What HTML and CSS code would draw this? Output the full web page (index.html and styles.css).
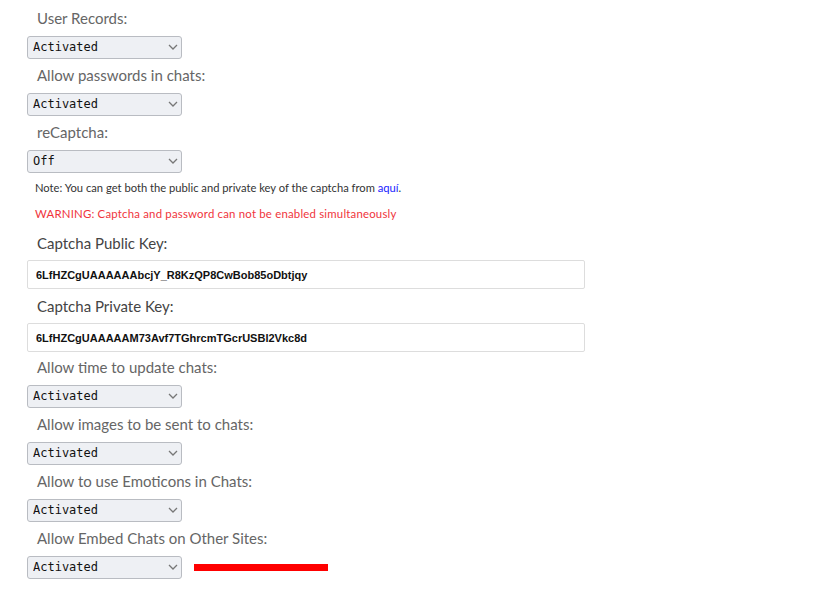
FILE: index.html
```html
<!DOCTYPE html>
<html>
<head>
<meta charset="utf-8">
<link rel="stylesheet" href="styles.css">
</head>
<body>
<div class="form">
  <label class="lbl">User Records:</label>
  <div class="sel"><select><option>Activated</option></select><svg class="chev" width="10" height="6" viewBox="0 0 10 6"><path d="M1 1l4 4 4-4" fill="none" stroke="#777" stroke-width="1.3"/></svg></div>

  <label class="lbl">Allow passwords in chats:</label>
  <div class="sel"><select><option>Activated</option></select><svg class="chev" width="10" height="6" viewBox="0 0 10 6"><path d="M1 1l4 4 4-4" fill="none" stroke="#777" stroke-width="1.3"/></svg></div>

  <label class="lbl">reCaptcha:</label>
  <div class="sel"><select><option>Off</option></select><svg class="chev" width="10" height="6" viewBox="0 0 10 6"><path d="M1 1l4 4 4-4" fill="none" stroke="#777" stroke-width="1.3"/></svg></div>

  <p class="note">Note: You can get both the public and private key of the captcha from <a href="#">aquí</a>.</p>
  <p class="warn">WARNING: Captcha and password can not be enabled simultaneously</p>

  <label class="lbl dark">Captcha Public Key:</label>
  <input class="key key-first" type="text" value="6LfHZCgUAAAAAAbcjY_R8KzQP8CwBob85oDbtjqy">

  <label class="lbl dark">Captcha Private Key:</label>
  <input class="key" type="text" value="6LfHZCgUAAAAAM73Avf7TGhrcmTGcrUSBl2Vkc8d">

  <label class="lbl">Allow time to update chats:</label>
  <div class="sel"><select><option>Activated</option></select><svg class="chev" width="10" height="6" viewBox="0 0 10 6"><path d="M1 1l4 4 4-4" fill="none" stroke="#777" stroke-width="1.3"/></svg></div>

  <label class="lbl">Allow images to be sent to chats:</label>
  <div class="sel"><select><option>Activated</option></select><svg class="chev" width="10" height="6" viewBox="0 0 10 6"><path d="M1 1l4 4 4-4" fill="none" stroke="#777" stroke-width="1.3"/></svg></div>

  <label class="lbl">Allow to use Emoticons in Chats:</label>
  <div class="sel"><select><option>Activated</option></select><svg class="chev" width="10" height="6" viewBox="0 0 10 6"><path d="M1 1l4 4 4-4" fill="none" stroke="#777" stroke-width="1.3"/></svg></div>

  <label class="lbl">Allow Embed Chats on Other Sites:</label>
  <div class="row">
    <div class="sel"><select><option>Activated</option></select><svg class="chev" width="10" height="6" viewBox="0 0 10 6"><path d="M1 1l4 4 4-4" fill="none" stroke="#777" stroke-width="1.3"/></svg></div>
    <div class="redbar"></div>
  </div>
</div>
</body>
</html>
```

FILE: styles.css
```css
html, body {
  margin: 0;
  padding: 0;
  background: #fff;
}
body {
  font-family: Lato, "Open Sans", sans-serif;
}
.form {
  display: flex;
  flex-direction: column;
  align-items: flex-start;
  padding: 8px 0 0 27px;
}
.lbl {
  display: block;
  font-size: 15px;
  line-height: 20px;
  color: #666;
  padding-left: 10px;
  margin-bottom: 7px;
}
.lbl.dark {
  color: #444;
  margin-bottom: 7px;
}
.sel {
  position: relative;
  width: 155px;
  height: 23px;
  margin-bottom: 7px;
}
.sel select {
  appearance: none;
  -webkit-appearance: none;
  width: 155px;
  height: 23px;
  margin: 0;
  padding: 0 0 0 5px;
  border: 1px solid #b9bcc2;
  border-radius: 3px;
  background: #eef0f4;
  font-family: "DejaVu Sans Mono", "Liberation Mono", monospace;
  font-size: 12px;
  color: #111;
}
.chev {
  position: absolute;
  right: 4px;
  top: 9px;
  pointer-events: none;
}
.note {
  margin: 2px 0 0 8px;
  font-size: 11.2px;
  line-height: 14px;
  color: #333;
}
.note a {
  color: #1a1aff;
  text-decoration: none;
}
.warn {
  margin: 12px 0 12px 8px;
  font-size: 11.4px;
  letter-spacing: 0.2px;
  line-height: 14px;
  color: #f0343c;
}
.key {
  box-sizing: border-box;
  width: 558px;
  height: 29px;
  margin: 0 0 5px 0;
  padding: 0 8px;
  border: 1px solid #ddd;
  border-radius: 2px;
  background: #fff;
  font-family: "Liberation Sans", Arial, sans-serif;
  font-weight: bold;
  font-size: 11px;
  color: #111;
  outline: none;
}
.key-first {
  margin-bottom: 7px;
}
.row {
  display: flex;
  align-items: center;
  gap: 12px;
}
.redbar {
  width: 134px;
  height: 7px;
  background: #ff0000;
  margin-bottom: 5px;
}
```
